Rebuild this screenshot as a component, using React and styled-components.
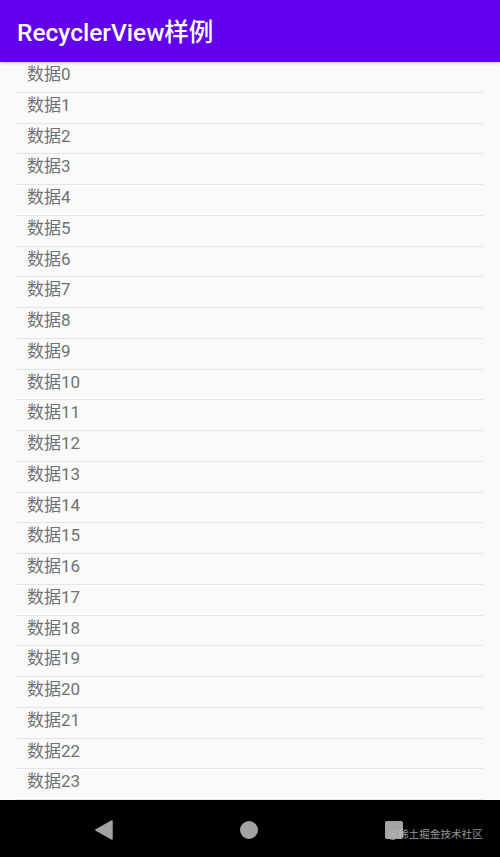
import React from 'react';
import styled, { createGlobalStyle } from 'styled-components';

const GlobalStyle = createGlobalStyle`
    html, body {
        margin: 0;
        padding: 0;
        background: #fafafa;
    }
    * {
        box-sizing: border-box;
    }
`;

const Screen = styled.div`
    width: 500px;
    height: 857px;
    display: flex;
    flex-direction: column;
    background: #fafafa;
    font-family: Roboto, "Noto Sans CJK SC", sans-serif;
    overflow: hidden;
`;

const AppBar = styled.header`
    height: 62px;
    flex: none;
    display: flex;
    align-items: center;
    padding: 0 17px 2px;
    background: #6200ee;
    box-shadow: 0 1px 3px rgba(0, 0, 0, 0.25);
    position: relative;
    z-index: 1;
`;

const Title = styled.h1`
    margin: 0;
    color: #ffffff;
    font-size: 24.5px;
    font-weight: 500;
    letter-spacing: 0;
`;

const List = styled.div`
    flex: 1;
    display: flex;
    flex-direction: column;
    overflow: hidden;
`;

const Row = styled.div`
    height: 30.75px;
    flex: none;
    display: flex;
    flex-direction: column;
`;

const Label = styled.div`
    flex: 1;
    padding: 0 0 0 27px;
    color: #717171;
    font-size: 17px;
    line-height: 24px;
`;

const Divider = styled.div`
    height: 1px;
    margin: 0 17px 0 16px;
    background: #e4e4e4;
`;

const NavBar = styled.nav`
    height: 57px;
    flex: none;
    display: flex;
    align-items: center;
    justify-content: center;
    background: #000;
    position: relative;
    padding: 3px 3px 0 0;
`;

const NavSlot = styled.div`
    width: 145px;
    display: flex;
    align-items: center;
    justify-content: center;
`;

const HomeDot = styled.div`
    width: 18px;
    height: 18px;
    border-radius: 50%;
    background: #a3a3a3;
`;

const RecentsBox = styled.div`
    width: 18px;
    height: 18px;
    border-radius: 2px;
    background: #a3a3a3;
`;

const Watermark = styled.span`
    position: absolute;
    left: 388px;
    top: 27px;
    color: rgba(200, 200, 200, 0.75);
    font-family: "Noto Sans CJK SC", sans-serif;
    font-size: 10.6px;
    line-height: 14px;
    white-space: nowrap;
`;

const items = Array.from({ length: 24 }, (_, i) => `数据${i}`);

function App() {
    return (
        <Screen>
            <GlobalStyle />
            <AppBar>
                <Title>RecyclerView样例</Title>
            </AppBar>
            <List>
                {items.map((text) => (
                    <Row key={text}>
                        <Label>{text}</Label>
                        <Divider />
                    </Row>
                ))}
            </List>
            <NavBar>
                <NavSlot>
                    <svg width="18" height="20" viewBox="0 0 18 20">
                        <path d="M17 1 L1 10 L17 19 Z" fill="#a3a3a3" stroke="#a3a3a3" strokeWidth="1.5" strokeLinejoin="round" />
                    </svg>
                </NavSlot>
                <NavSlot>
                    <HomeDot />
                </NavSlot>
                <NavSlot>
                    <RecentsBox />
                </NavSlot>
                <Watermark>@稀土掘金技术社区</Watermark>
            </NavBar>
        </Screen>
    );
}

export default App;
